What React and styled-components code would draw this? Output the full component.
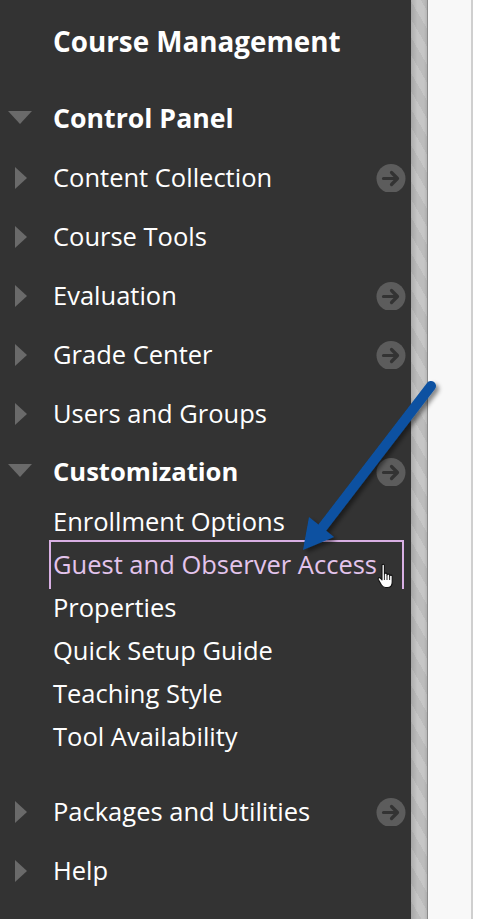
import React from 'react'
import styled, { createGlobalStyle } from 'styled-components'

const GlobalStyle = createGlobalStyle`
  html, body {
    margin: 0;
    padding: 0;
    background: #ffffff;
  }
  body {
    font-family: 'Open Sans', 'Noto Sans', sans-serif;
  }
`

const Page = styled.div`
  display: flex;
  flex-direction: row;
  height: 919px;
  width: 504px;
  overflow: hidden;
  position: relative;
`

const Sidebar = styled.nav`
  background-color: #333333;
  width: 411px;
  flex-shrink: 0;
  color: #ffffff;
`

const Stripe = styled.div`
  width: 16px;
  flex-shrink: 0;
  border-right: 1px solid #8a8a8a;
  background:
    linear-gradient(to right, rgba(0, 0, 0, 0.12), rgba(0, 0, 0, 0) 40%, rgba(0, 0, 0, 0) 80%, rgba(0, 0, 0, 0.08)),
    repeating-linear-gradient(60deg, #bcbcbc 0, #bcbcbc 9px, #c6c6c6 9px, #c6c6c6 18px);
`

const ContentArea = styled.div`
  width: 43px;
  flex-shrink: 0;
  background-color: #f8f8f8;
  border-right: 2px solid #cfcfcf;
`

const Blank = styled.div`
  flex: 1;
  background-color: #ffffff;
`

const Title = styled.h1`
  margin: 0;
  padding-left: 53px;
  height: 82px;
  line-height: 82px;
  font-size: 27.8px;
  font-weight: 700;
`

const List = styled.ul`
  list-style: none;
  margin: 6px 0 0;
  padding: 0;
`

const Row = styled.li`
  position: relative;
  display: flex;
  align-items: center;
  height: ${p => p.$h || 59}px;
  padding-left: 53px;
  padding-right: 5px;
  font-size: ${p => p.$size || 25.5}px;
  font-weight: ${p => (p.$bold ? 700 : 400)};
`

const Label = styled.span`
  flex: 1;
`

const Caret = styled.span`
  position: absolute;
  width: 0;
  height: 0;
  ${p =>
    p.$open
      ? `
    left: 8px;
    top: calc(50% - 7px);
    border-left: 12px solid transparent;
    border-right: 12px solid transparent;
    border-top: 13px solid #6a6a6a;
  `
      : `
    left: 15px;
    top: calc(50% - 10px);
    border-top: 11px solid transparent;
    border-bottom: 11px solid transparent;
    border-left: 12px solid #6a6a6a;
  `}
`

const GoIcon = styled.svg`
  width: 30px;
  height: 28px;
  margin-top: 2px;
  flex-shrink: 0;
`

const SubList = styled.ul`
  list-style: none;
  margin: 0;
  padding: 0 0 23px;
`

const SubItem = styled.li`
  position: relative;
  height: 43px;
  line-height: 43px;
  padding-left: 53px;
  font-size: 25.5px;
  color: ${p => (p.$active ? '#e3c4ec' : '#ffffff')};

  ${p =>
    p.$active &&
    `
    &::before {
      content: '';
      position: absolute;
      left: 49px;
      right: 7px;
      top: -3px;
      bottom: -3px;
      border: 2px solid #d9b0e4;
      border-bottom: none;
    }
  `}
`

const Overlay = styled.svg`
  position: absolute;
  left: 0;
  top: 0;
  pointer-events: none;
`

const Cursor = styled.svg`
  position: absolute;
  left: 377px;
  top: 563px;
  width: 18px;
  height: 26px;
`

const GoArrow = () => (
  <GoIcon viewBox="0 0 30 28">
    <circle cx="15" cy="14.5" r="14.5" fill="#5c5c5c" />
    <path d="M7.5 14.5 H21 M15.5 8.5 L21.5 14.5 L15.5 20.5" stroke="#333333" strokeWidth="3.2" fill="none" strokeLinecap="round" strokeLinejoin="round" />
  </GoIcon>
)

const menu = [
  { label: 'Content Collection', go: true },
  { label: 'Course Tools' },
  { label: 'Evaluation', go: true },
  { label: 'Grade Center', go: true },
  { label: 'Users and Groups' },
]

const customization = [
  'Enrollment Options',
  'Guest and Observer Access',
  'Properties',
  'Quick Setup Guide',
  'Teaching Style',
  'Tool Availability',
]

export default function App() {
  return (
    <Page>
      <GlobalStyle />
      <Sidebar>
        <Title>Course Management</Title>
        <List>
          <Row $bold $size={26.7}>
            <Caret $open />
            <Label>Control Panel</Label>
          </Row>
          {menu.map(item => (
            <Row key={item.label}>
              <Caret />
              <Label>{item.label}</Label>
              {item.go && <GoArrow />}
            </Row>
          ))}
          <Row $bold $h={58} $size={25.6}>
            <Caret $open />
            <Label>Customization</Label>
            <GoArrow />
          </Row>
          <SubList>
            {customization.map(label => (
              <SubItem key={label} $active={label === 'Guest and Observer Access'}>
                {label}
              </SubItem>
            ))}
          </SubList>
          <Row>
            <Caret />
            <Label>Packages and Utilities</Label>
            <GoArrow />
          </Row>
          <Row>
            <Caret />
            <Label>Help</Label>
          </Row>
        </List>
      </Sidebar>
      <Stripe />
      <ContentArea />
      <Blank />

      <Overlay width="504" height="919" viewBox="0 0 504 919">
        <defs>
          <filter id="shadow" x="-20%" y="-20%" width="140%" height="140%">
            <feDropShadow dx="3" dy="3" stdDeviation="2" floodColor="#000" floodOpacity="0.45" />
          </filter>
        </defs>
        <g filter="url(#shadow)" fill="#0a51a1">
          <line x1="431" y1="386" x2="322" y2="528" stroke="#0a51a1" strokeWidth="10" strokeLinecap="round" />
          <polygon points="303,550 309,517 334,537" />
        </g>
      </Overlay>

      <Cursor viewBox="0 0 18 26">
        <path
          d="M5 2.2 C5 1 7.4 1 7.4 2.2 V11 C7.6 9.8 9.8 9.8 10 11 V12 C10.2 10.8 12.4 10.8 12.6 12 V13 C12.8 11.8 15 11.8 15.2 13 V19 C15.2 22 13.5 24.5 10.5 24.5 H8.5 C6.5 24.5 5.5 23.5 4.5 22 L1.3 16.5 C0.6 15.2 2.2 14 3.3 15 L5 16.8 Z"
          fill="#ffffff"
          stroke="#111111"
          strokeWidth="1.1"
          strokeLinejoin="round"
        />
        <path d="M7.4 11 V17 M10 12 V17 M12.6 13 V17" stroke="#111111" strokeWidth="0.9" />
      </Cursor>
    </Page>
  )
}
